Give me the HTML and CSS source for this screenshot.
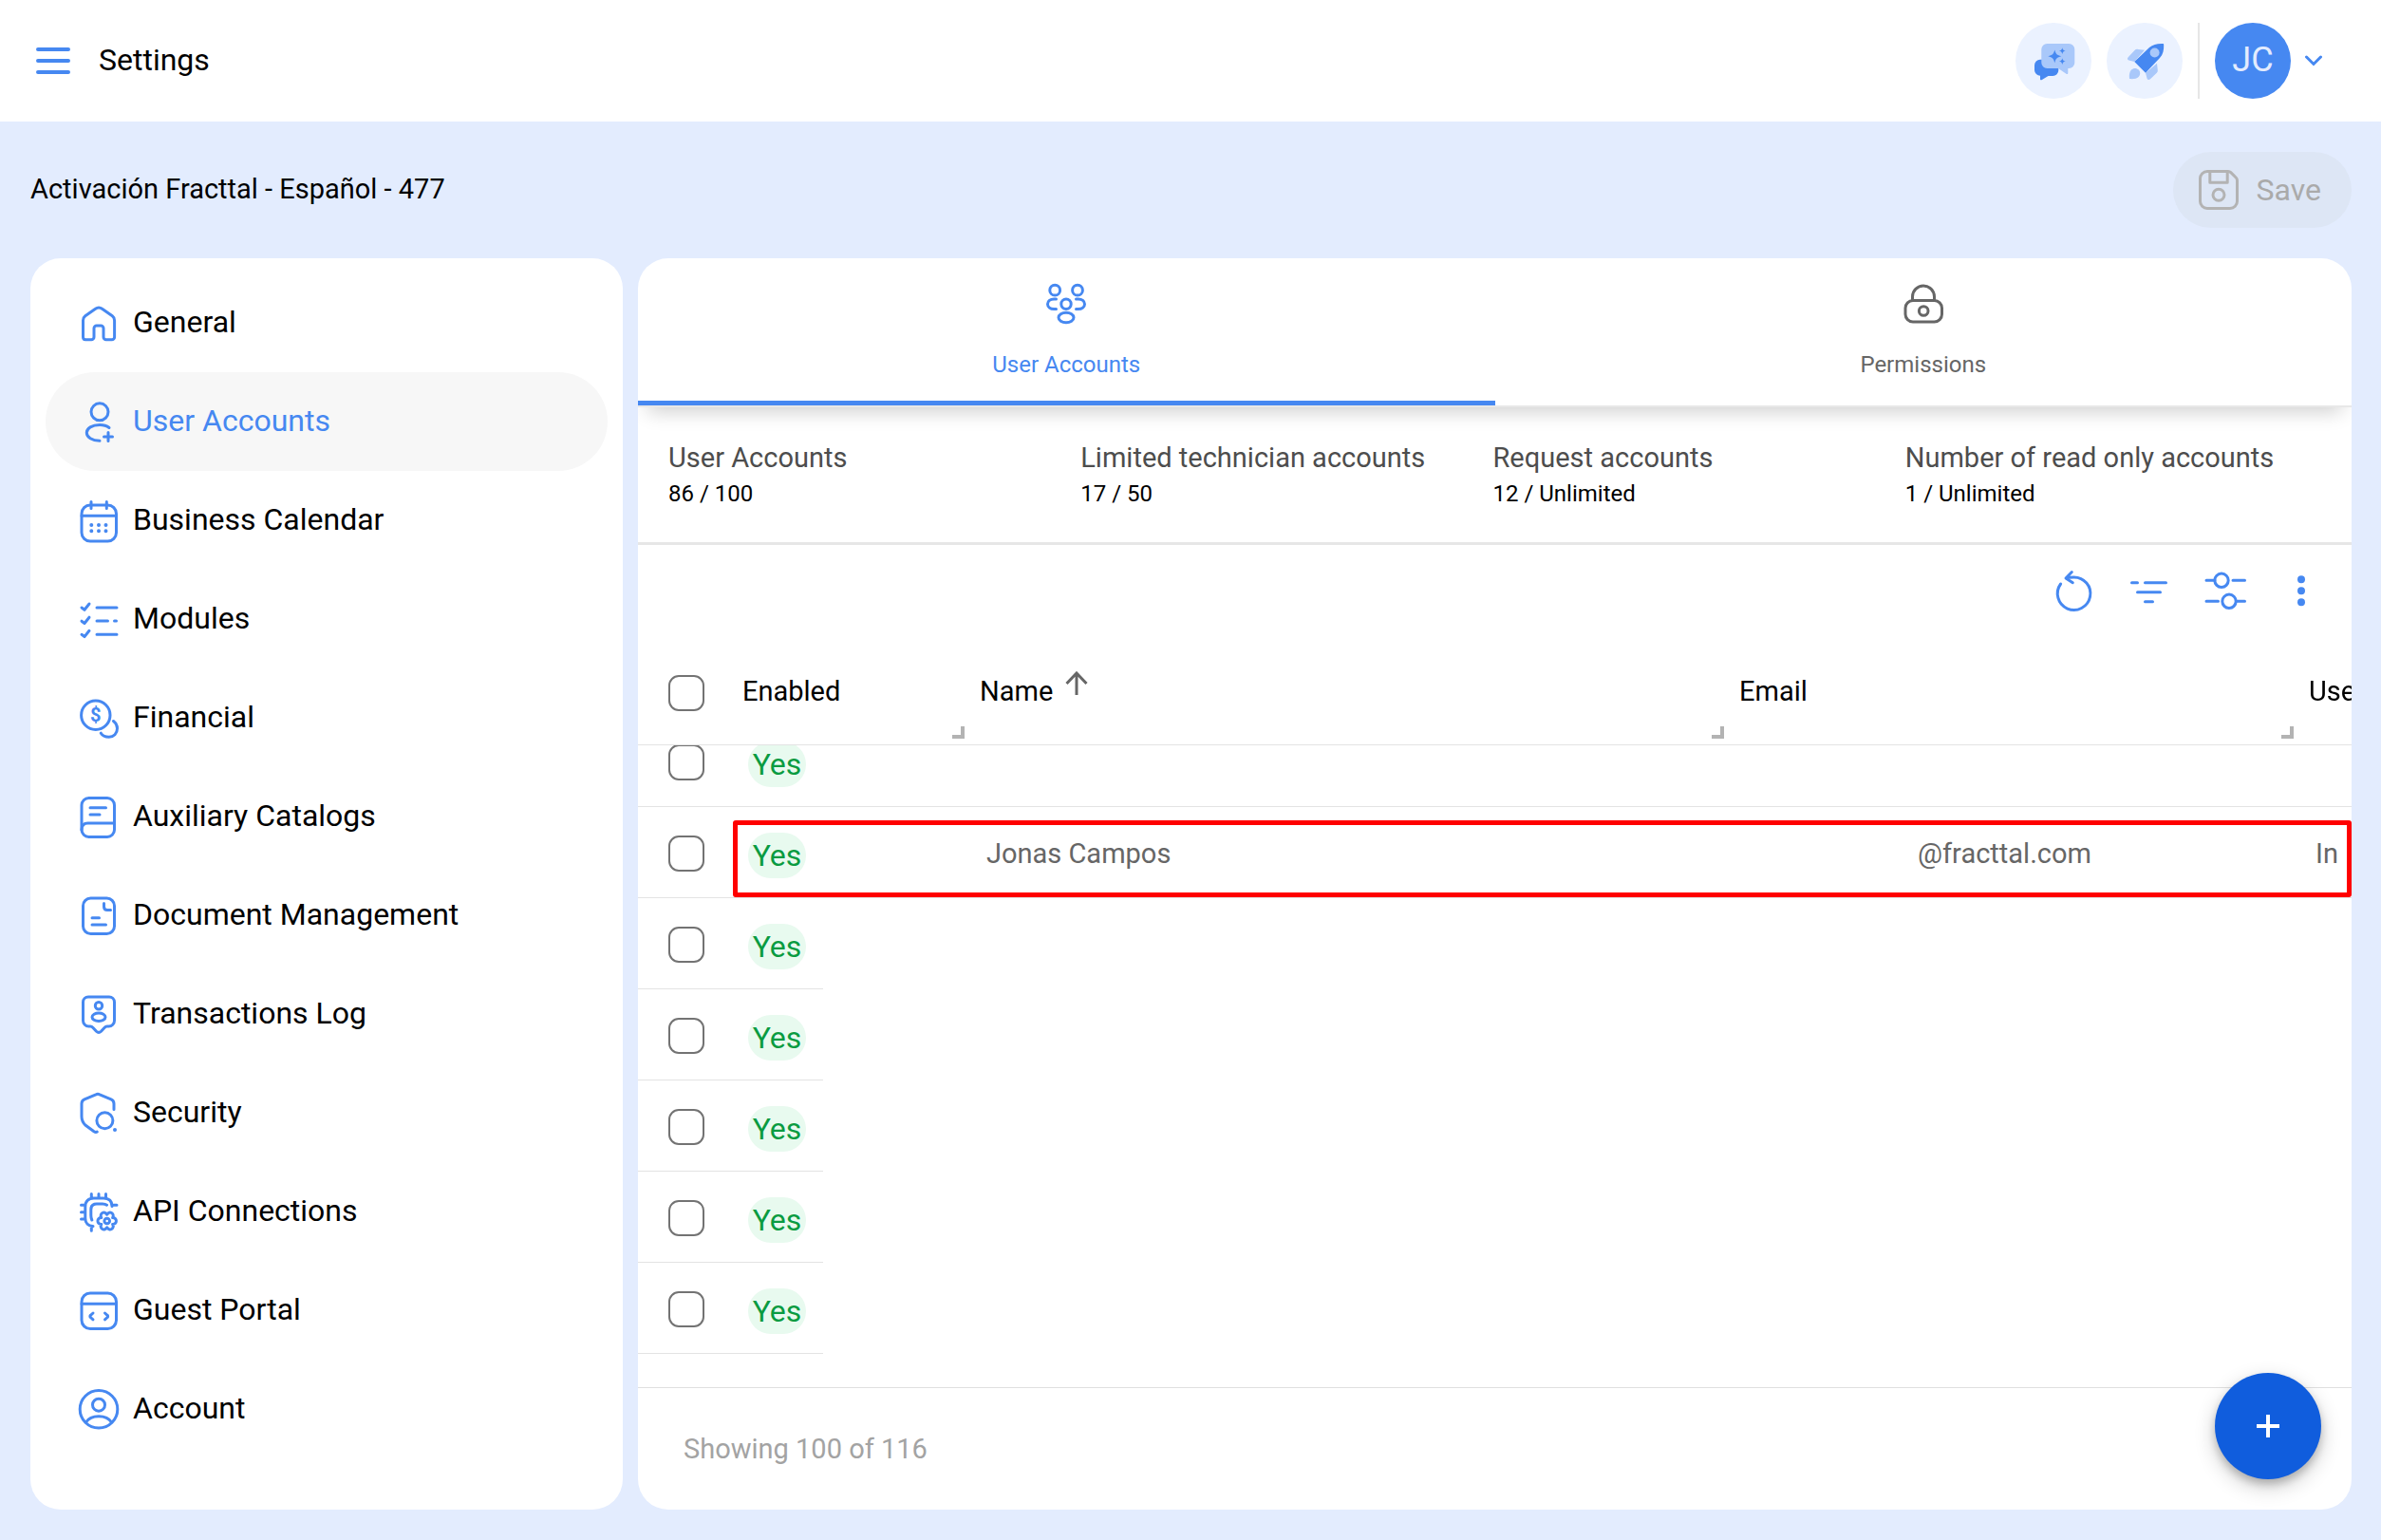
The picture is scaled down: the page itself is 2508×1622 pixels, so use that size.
FILE: index.html
```html
<!DOCTYPE html>
<html lang="en">
<head>
  <meta charset="UTF-8">
  <meta name="viewport" content="width=device-width, initial-scale=1.0">
  <title>Settings</title>
  <link rel="stylesheet" href="styles.css">
</head>
<body>
  <header class="topbar">
    <button class="icon-btn" aria-label="Menu">
      <svg class="icon" viewBox="0 0 48 48"><path stroke-width="4" d="M8 12h32M8 24h32M8 36h32"/></svg>
    </button>
    <h1>Settings</h1>
    <div class="topbar-actions">
      <button class="round-btn" aria-label="Assistant">
        <svg class="icon solid" viewBox="0 0 48 48">
          <path d="M10 22.700h13.300a6 6 0 0 1 6 6V34a6 6 0 0 1-6 6H18.500l-7 4.200a1 1 0 0 1-1.500-1V39.700A6 6 0 0 1 4 34v-5.300a6 6 0 0 1 6-6z"/>
          <path class="light" d="M17.300 6h23a6 6 0 0 1 6 6v14a6 6 0 0 1-6 6H39.300v5a1 1 0 0 1-1.500.9L29 32H17.300a6 6 0 0 1-6-6V12a6 6 0 0 1 6-6z"/>
          <path d="M25.300 12.500c1.200 4.500 2.300 5.600 7 6.800-4.700 1.200-5.800 2.300-7 7-1.200-4.700-2.300-5.800-7-7 4.700-1.200 5.800-2.300 7-6.800zM33.300 10.200c.6 2.300 1.100 2.800 3.400 3.400-2.300.6-2.800 1.100-3.400 3.500-.6-2.400-1.100-2.900-3.400-3.500 2.300-.6 2.800-1.100 3.400-3.400zM33.300 21.200c.6 2.300 1.100 2.800 3.400 3.400-2.300.6-2.800 1.100-3.400 3.500-.6-2.400-1.100-2.900-3.400-3.500 2.300-.6 2.800-1.100 3.400-3.400z"/>
        </svg>
      </button>
      <button class="round-btn" aria-label="Getting started">
        <svg class="icon solid" viewBox="0 0 48 48">
          <path class="light" d="M13.300 25l-6-1.500c-1.500-.5-1.600-1.900-.8-3l7-7.500c1-1 2-1.300 3.500-1.100l7 .9zM25 36.700l12-10 .8 7.300c0 1-.1 1.800-1 2.700L30 43.300c-1.400 1.200-3 .8-3.500-.8zM8 43c-.5-4 .2-7.500 2-9.500 2.400-2.300 5.700-2 7.800 0 2 2.200 2 5.400-.2 7.500-2 2-5.600 2.400-9.600 2z"/>
          <path d="M13.300 25L29 10c3.800-3.200 8-4.200 14-4 1 0 1.200.4 1.200 1.200.2 5.800-.9 10.300-4.200 13.800L25 36.700z"/>
          <circle class="light" cx="34.600" cy="15.500" r="5"/>
        </svg>
      </button>
      <button class="profile" aria-label="Profile menu">
        <span class="avatar">JC</span>
        <svg class="chevron" viewBox="0 0 20 12"><path d="M2.500 2L10 9.500 17.500 2"/></svg>
      </button>
    </div>
  </header>

  <div class="subbar">
    <h2>Activación Fracttal - Español - 477</h2>
    <button class="save-btn" disabled>
      <svg class="icon" viewBox="0 0 48 48"><path d="M12 4.500h22c1.200 0 2 .3 2.800 1.100l5.600 5.600c.8.800 1.100 1.600 1.100 2.800v22a7.500 7.500 0 0 1-7.500 7.500H12A7.500 7.500 0 0 1 4.500 36V12A7.500 7.500 0 0 1 12 4.500zM14.800 5v11.200h18.400V5"/><circle cx="24" cy="29.300" r="6"/></svg>
      Save
    </button>
  </div>

  <div class="content">
    <nav class="sidebar">
      <a class="nav-item" href="#">
        <svg class="icon" viewBox="0 0 48 48"><path d="M7.500 21.500c0-2 .7-3.600 2.300-4.800L20.500 9.300c2.200-1.700 4.900-1.700 7.100 0l10.700 7.400c1.600 1.200 2.300 2.800 2.300 4.800V39a2.800 2.800 0 0 1-2.800 2.800h-6A2.800 2.800 0 0 1 29 39v-9.200a2.800 2.800 0 0 0-2.800-2.800h-4.400a2.800 2.800 0 0 0-2.800 2.800V39a2.800 2.800 0 0 1-2.800 2.800h-6A2.800 2.800 0 0 1 7.500 39z"/></svg>
        General
      </a>
      <a class="nav-item active" href="#">
        <svg class="icon" viewBox="0 0 48 48"><circle cx="25" cy="13.800" r="9"/><path d="M35 30.500c-2.500-2-6-3-10-3-8 0-13.700 3.500-13.700 8.300S17 44.300 25 44.300M29.500 40h9M34 35.500v9"/></svg>
        User Accounts
      </a>
      <a class="nav-item" href="#">
        <svg class="icon" viewBox="0 0 48 48"><rect x="6" y="8" width="36.500" height="38" rx="9"/><path d="M6 19.300h36.500M16 4.500v7M32.300 4.500v7"/><path class="dots" d="M16.300 29h0M24 29h0M31.500 29h0M16.300 35.300h0M24 35.300h0M31.500 35.300h0"/></svg>
        Business Calendar
      </a>
      <a class="nav-item" href="#">
        <svg class="icon" viewBox="0 0 48 48"><path d="M22 12h21M22 26h11.500M40.500 26h2M22 40.300h21M6 12l3 2.300L14 8M6 26.200l3 2.300 5-6.300M6 40.300l3 2.300 5-6.300"/></svg>
        Modules
      </a>
      <a class="nav-item" href="#">
        <svg class="icon" viewBox="0 0 48 48"><circle cx="20.800" cy="21.300" r="15.200"/><path d="M39.500 27.500c2.600 2 4 4.600 4 7.800 0 5.200-3.700 8.900-8.700 8.900-3.800 0-6.900-1.400-8.500-4"/><text x="20.800" y="28.300">$</text></svg>
        Financial
      </a>
      <a class="nav-item" href="#">
        <svg class="icon" viewBox="0 0 48 48"><rect x="6" y="4.500" width="34.500" height="41" rx="7.500"/><path d="M15 14.700h16.500M15 22h10M6 38c0-4.500 2.300-7 6.500-7h28"/></svg>
        Auxiliary Catalogs
      </a>
      <a class="nav-item" href="#">
        <svg class="icon" viewBox="0 0 48 48"><rect x="7.500" y="6" width="33" height="37.500" rx="8"/><path d="M29.500 11.500V15c0 2.500 1 3.500 3.500 3.500h3.500M17 26.700h7.500M17 34h14.500"/></svg>
        Document Management
      </a>
      <a class="nav-item" href="#">
        <svg class="icon" viewBox="0 0 48 48"><path d="M13 6h22a5.500 5.500 0 0 1 5.500 5.500V31a6 6 0 0 1-6 6h-1.600c-1.300 0-2 .4-2.900 1.400l-3.500 3.800c-1.500 1.500-3.500 1.500-5 0L18 38.400c-.9-1-1.600-1.400-2.900-1.400h-1.600a6 6 0 0 1-6-6V11.500A5.500 5.500 0 0 1 13 6z"/><circle cx="24" cy="15.200" r="3.700"/><ellipse cx="24" cy="27.300" rx="7" ry="4.200"/></svg>
        Transactions Log
      </a>
      <a class="nav-item" href="#">
        <svg class="icon" viewBox="0 0 48 48"><path d="M40 20.500V14.500c0-2.300-1-3.800-3-4.600L25 4.800c-1.400-.7-2.600-.7-4 0L9 9.900c-2 .8-3 2.300-3 4.600V28c0 4 1.200 6.500 4.200 9.300l8.800 6.500c1.200.8 2.300 1 3.300.3"/><circle cx="30.400" cy="32.300" r="8.500"/><path class="dots" d="M41 42h0"/></svg>
        Security
      </a>
      <a class="nav-item" href="#">
        <svg class="icon" viewBox="0 0 48 48"><path d="M18 39.500c-5 0-8.200-3.200-8.200-8.500V19c0-5.600 3.400-9 9-9H29c5.600 0 9 3 9 8.500M16.300 5.500V10M24 5.500V10M31.500 5.500V10M5.500 17.300h4.300M5.500 24.700h4.300M5.500 32h4.300M38 17.300h5M16.300 39.500v4.800M16.800 33c-.7-1.500-1-3-1-5v-6c0-3.800 2.200-6 6-6H28c2 0 3.300.3 4.500 1.200"/><path d="M38.600 30.600C43.700 30.400 43.700 37.600 38.600 37.400 41.300 41.800 35.100 45.300 32.700 40.800 30.300 45.300 24.100 41.800 26.800 37.400 21.700 37.600 21.700 30.400 26.800 30.600 24.100 26.200 30.300 22.700 32.700 27.200 35.100 22.700 41.300 26.200 38.600 30.600z"/><circle cx="32.700" cy="34" r="2.800"/></svg>
        API Connections
      </a>
      <a class="nav-item" href="#">
        <svg class="icon" viewBox="0 0 48 48"><rect x="6" y="6" width="36.500" height="37.500" rx="9"/><path d="M6 17.300h36.500M18 27l-2.600 2.300a1.400 1.400 0 0 0 0 2.200L18 33.800M30.500 27l2.600 2.300a1.400 1.400 0 0 1 0 2.200l-2.600 2.300"/></svg>
        Guest Portal
      </a>
      <a class="nav-item" href="#">
        <svg class="icon" viewBox="0 0 48 48"><circle cx="24" cy="24.300" r="19.800"/><circle cx="24" cy="19.700" r="6.500"/><path d="M10.500 38c2.500-4 7.300-6.300 13.500-6.300S35 34 37.500 38"/></svg>
        Account
      </a>
    </nav>

    <main class="panel">
      <div class="tabs" role="tablist">
        <button class="tab active" role="tab" aria-selected="true">
          <svg class="icon" viewBox="0 0 48 48"><circle cx="12.200" cy="9.700" r="5.400"/><circle cx="36" cy="9.700" r="5.400"/><circle cx="24" cy="24.200" r="5.200"/><ellipse cx="24" cy="38.500" rx="8" ry="5.200"/><path d="M13.500 19h-2.200c-4 0-6.800 2.300-6.800 5.300s2.800 5.300 6.800 5.300h2.200M34.500 19h2.200c4 0 6.800 2.300 6.800 5.300s-2.800 5.300-6.800 5.300h-2.200"/></svg>
          User Accounts
        </button>
        <button class="tab" role="tab" aria-selected="false">
          <svg class="icon" viewBox="0 0 48 48"><rect x="5" y="20.500" width="38.500" height="22.500" rx="8"/><path d="M12.500 20.500V16.500a11.500 11.500 0 0 1 23 0v4"/><circle cx="24.200" cy="31.500" r="4.800"/></svg>
          Permissions
        </button>
      </div>

      <dl class="stats">
        <div>
          <dt>User Accounts</dt>
          <dd>86 / 100</dd>
        </div>
        <div>
          <dt>Limited technician accounts</dt>
          <dd>17 / 50</dd>
        </div>
        <div>
          <dt>Request accounts</dt>
          <dd>12 / Unlimited</dd>
        </div>
        <div>
          <dt>Number of read only accounts</dt>
          <dd>1 / Unlimited</dd>
        </div>
      </dl>

      <div class="toolbar">
        <button class="tool-btn" aria-label="Refresh">
          <svg class="icon" viewBox="0 0 48 48"><path d="M10.600 16A17.300 17.300 0 1 0 24.200 8.900c-2.500 0-5 .2-8 1.200M22.300 3.500L16 10l7.300 4.700"/></svg>
        </button>
        <button class="tool-btn" aria-label="Filter">
          <svg class="icon" viewBox="0 0 48 48"><path d="M5.500 14.700h6M19.500 14.700h22M11.500 24.700h24M19.500 34.700h8"/></svg>
        </button>
        <button class="tool-btn" aria-label="Columns">
          <svg class="icon" viewBox="0 0 48 48"><path d="M4 12.300h9M32 12.300h12.500M4 34.300h12.500M36 34.300h8.500"/><circle cx="20" cy="12.300" r="7.200"/><circle cx="28" cy="34.300" r="7.200"/></svg>
        </button>
        <button class="tool-btn" aria-label="More">
          <svg class="icon solid" viewBox="0 0 48 48"><circle cx="24" cy="11.300" r="4"/><circle cx="24" cy="23.300" r="4"/><circle cx="24" cy="35.300" r="4"/></svg>
        </button>
      </div>

      <div class="table-wrap" id="tableWrap">
        <table>
          <colgroup>
            <col class="col-check">
            <col class="col-enabled">
            <col class="col-name">
            <col class="col-email">
            <col>
          </colgroup>
          <thead>
            <tr>
              <th><input type="checkbox" aria-label="Select all"></th>
              <th class="resizable">Enabled</th>
              <th class="resizable">Name
                <svg class="sort" viewBox="0 0 24 26"><path d="M12 25V2M1.500 13L12 2l10.500 11"/></svg>
              </th>
              <th class="resizable">Email</th>
              <th>Use</th>
            </tr>
          </thead>
          <tbody>
            <tr>
              <td><input type="checkbox" aria-label="Select row 1"></td>
              <td class="enabled"><span class="badge">Yes</span></td>
              <td></td>
              <td></td>
              <td></td>
            </tr>
            <tr class="marked">
              <td><input type="checkbox" aria-label="Select row 2"></td>
              <td class="enabled"><span class="badge">Yes</span></td>
              <td>Jonas Campos</td>
              <td class="masked">@fracttal.com</td>
              <td>In<span class="marker"></span></td>
            </tr>
            <tr class="hidden-data">
              <td><input type="checkbox" aria-label="Select row 3"></td>
              <td class="enabled"><span class="badge">Yes</span></td>
              <td colspan="3"></td>
            </tr>
            <tr class="hidden-data">
              <td><input type="checkbox" aria-label="Select row 4"></td>
              <td class="enabled"><span class="badge">Yes</span></td>
              <td colspan="3"></td>
            </tr>
            <tr class="hidden-data">
              <td><input type="checkbox" aria-label="Select row 5"></td>
              <td class="enabled"><span class="badge">Yes</span></td>
              <td colspan="3"></td>
            </tr>
            <tr class="hidden-data">
              <td><input type="checkbox" aria-label="Select row 6"></td>
              <td class="enabled"><span class="badge">Yes</span></td>
              <td colspan="3"></td>
            </tr>
            <tr class="hidden-data">
              <td><input type="checkbox" aria-label="Select row 7"></td>
              <td class="enabled"><span class="badge">Yes</span></td>
              <td colspan="3"></td>
            </tr>
            <tr class="spacer">
              <td colspan="5"></td>
            </tr>
          </tbody>
        </table>
      </div>

      <footer class="panel-footer">Showing 100 of 116</footer>
      <button class="fab" aria-label="Add user">
        <svg viewBox="0 0 26 26"><path d="M13 1v24M1 13h24"/></svg>
      </button>
    </main>
  </div>

  <script src="script.js"></script>
</body>
</html>
```
FILE: styles.css
```css
* {
  box-sizing: border-box;
}

body {
  font-family: Roboto, Arial, sans-serif;
  font-size: 29px;
  background-color: #e3ecfe;
  color: #000;
  margin: 0;
  height: 100vh;
  display: flex;
  flex-direction: column;
}

button {
  font-family: inherit;
  border: none;
  padding: 0;
  background: none;
  cursor: pointer;
}

h1, h2 {
  font-weight: 400;
  margin: 0;
  padding-bottom: 3px;
}

h1 {
  font-size: 32px;
}

h2 {
  font-size: 29px;
}

/* icons */
.icon {
  display: block;
  width: 48px;
  height: 48px;
  flex: none;
  fill: none;
  stroke: #4688f1;
  stroke-width: 3;
  stroke-linecap: round;
  stroke-linejoin: round;
}

.icon.solid {
  fill: #4688f1;
  stroke: none;
}

.icon .light {
  fill: #a9c8fa;
}

.icon .dots {
  stroke-width: 4;
}

.icon text {
  font-size: 20px;
  font-weight: 700;
  text-anchor: middle;
  fill: #4688f1;
  stroke: none;
}

/* top bar */
.topbar {
  display: flex;
  align-items: center;
  gap: 24px;
  height: 128px;
  flex: none;
  padding: 0 61px 0 32px;
  background-color: #fff;
}

.topbar-actions {
  display: flex;
  gap: 16px;
  margin-left: auto;
}

.round-btn {
  display: flex;
  align-items: center;
  justify-content: center;
  width: 80px;
  height: 80px;
  border-radius: 50%;
  background-color: #ebf2ff;
}

.profile {
  display: flex;
  align-items: center;
  gap: 14px;
  padding-left: 16px;
  border-left: 2px solid #e6e6e6;
}

.avatar {
  width: 80px;
  height: 80px;
  border-radius: 50%;
  background-color: #4688f1;
  color: #e3ecfe;
  font-size: 36px;
  line-height: 78px;
}

.chevron {
  width: 20px;
  height: 12px;
  fill: none;
  stroke: #4688f1;
  stroke-width: 3;
  stroke-linecap: round;
}

.subbar {
  display: flex;
  align-items: center;
  justify-content: space-between;
  height: 144px;
  flex: none;
  padding: 0 31px 0 32px;
}

.save-btn {
  display: flex;
  align-items: center;
  gap: 16px;
  height: 80px;
  padding: 0 32px 0 24px;
  border-radius: 40px;
  background-color: #dde6f5;
  color: #aaa;
  font-size: 32px;
}

.save-btn .icon {
  stroke: #b3b3b3;
}

/* layout */
.content {
  display: flex;
  gap: 16px;
  flex: 1;
  min-height: 0;
  padding: 0 31px 32px 32px;
}

.sidebar {
  width: 624px;
  flex: none;
  padding: 16px;
  border-radius: 32px;
  background-color: #fff;
}

.nav-item {
  display: flex;
  align-items: center;
  gap: 12px;
  height: 104px;
  padding: 0 32px 3px;
  border-radius: 52px;
  color: #000;
  font-size: 32px;
  text-decoration: none;
}

.nav-item .icon {
  margin-top: 3px;
}

.nav-item.active {
  background-color: #f7f7f7;
  color: #4688f1;
}

.panel {
  position: relative;
  display: flex;
  flex-direction: column;
  flex: 1;
  min-width: 0;
  border-radius: 32px;
  background-color: #fff;
  overflow: hidden;
}

/* tabs */
.tabs {
  display: flex;
  flex: none;
  border-bottom: 2px solid #e8e8e8;
  box-shadow: 0 14px 20px -10px rgba(0, 0, 0, 0.2);
}

.tab {
  display: flex;
  flex-direction: column;
  align-items: center;
  gap: 25px;
  flex: 1;
  padding: 24px 0 23px;
  border-bottom: 5px solid transparent;
  color: #666;
  font-size: 24px;
  line-height: 30px;
}

.tab .icon {
  stroke: #666;
}

.tab.active {
  color: #4688f1;
  border-bottom-color: #4688f1;
}

.tab.active .icon {
  stroke: #4688f1;
}

/* account counters */
.stats {
  display: grid;
  grid-template-columns: repeat(4, 1fr);
  flex: none;
  margin: 0;
  padding: 33px 36px 33px 32px;
  border-bottom: 3px solid #e6e6e6;
}

.stats dt {
  color: #4d4d4d;
  line-height: 40px;
}

.stats dd {
  margin: 0;
  font-size: 24px;
  line-height: 36px;
}

.toolbar {
  display: flex;
  justify-content: flex-end;
  align-items: center;
  height: 98px;
  flex: none;
  padding-right: 13px;
}

.tool-btn {
  width: 80px;
  height: 80px;
  padding: 16px;
}

/* table */
.table-wrap {
  flex: 1;
  min-height: 0;
  overflow-x: hidden;
  overflow-y: auto;
  scrollbar-width: none;
}

table {
  width: 100%;
  table-layout: fixed;
  border-collapse: separate;
  border-spacing: 0;
}

.col-check {
  width: 94px;
}

.col-enabled {
  width: 250px;
}

.col-name {
  width: 800px;
}

.col-email {
  width: 600px;
}

th {
  position: sticky;
  top: 0;
  z-index: 1;
  height: 113px;
  padding: 0 0 0 16px;
  border-bottom: 1px solid #e3e3e3;
  background-color: #fff;
  font-weight: 400;
  line-height: 48px;
  text-align: left;
}

th:first-child {
  padding: 4px 0 0 32px;
}

/* corner grip at the end of a column */
.resizable::after {
  content: "";
  position: absolute;
  right: 0;
  bottom: 6px;
  width: 9px;
  height: 9px;
  border-right: 4px solid #b3b3b3;
  border-bottom: 4px solid #b3b3b3;
}

.sort {
  width: 24px;
  height: 26px;
  margin-left: 6px;
  vertical-align: 5px;
  fill: none;
  stroke: #666;
  stroke-width: 3;
}

td {
  height: 96px;
  padding: 2px 0 0 23px;
  border-bottom: 1px solid #e3e3e3;
  color: #666;
}

td:first-child {
  padding-left: 32px;
}

input[type="checkbox"] {
  appearance: none;
  display: block;
  width: 38px;
  height: 38px;
  margin: 0;
  border: 2px solid #737373;
  border-radius: 11px;
  background-color: #fff;
}

.enabled {
  padding: 6px 0 0 22px;
}

.badge {
  display: block;
  width: 61px;
  height: 48px;
  border-radius: 24px;
  background-color: #e8faef;
  color: #0a9b41;
  font-size: 32px;
  line-height: 48px;
  text-align: center;
}

.masked {
  padding-left: 204px;
}

.hidden-data td {
  border-bottom-color: transparent;
}

.hidden-data td:first-child {
  border-bottom-color: #e3e3e3;
}

/* the row line stops where the hidden data starts */
.hidden-data .enabled {
  border-bottom: none;
  background: linear-gradient(#e3e3e3, #e3e3e3) left bottom / 101px 1px no-repeat;
}

.spacer td {
  border: none;
}

.marked {
  position: relative;
}

.marker {
  position: absolute;
  top: 14px;
  bottom: 1px;
  left: 100px;
  right: 0;
  border: 5px solid #f00;
  border-radius: 3px;
}

.panel-footer {
  display: flex;
  align-items: center;
  height: 129px;
  flex: none;
  padding-left: 48px;
  border-top: 1px solid #e0e0e0;
  color: #a3a3a3;
}

.fab {
  position: absolute;
  right: 32px;
  bottom: 32px;
  width: 112px;
  height: 112px;
  border-radius: 50%;
  background-color: #105ddd;
  box-shadow: 0 5px 8px rgba(0, 0, 0, 0.2), 0 8px 22px rgba(0, 0, 0, 0.2);
}

.fab svg {
  display: block;
  width: 26px;
  height: 26px;
  margin: 0 auto;
  stroke: #fff;
  stroke-width: 4;
}
```
FILE: script.js
```js
// keep the list scrolled a little, under the sticky header
document.getElementById('tableWrap').scrollTop = 31;
```
